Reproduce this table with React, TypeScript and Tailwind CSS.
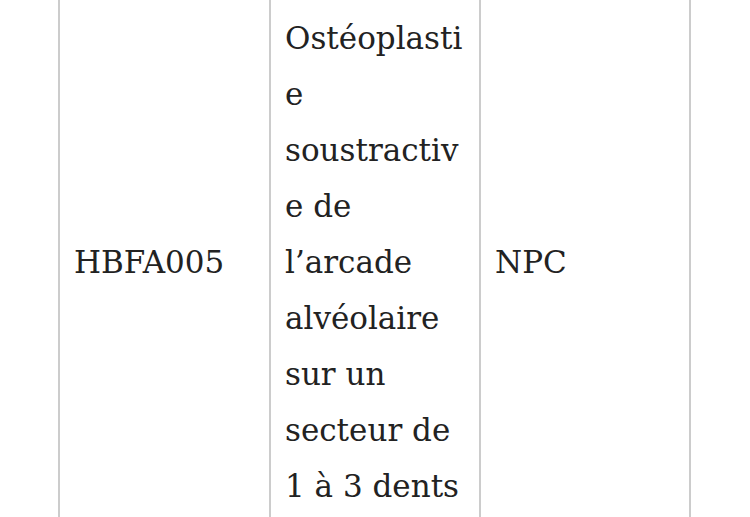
import React from 'react';

const descriptionLines = [
  'Ostéoplasti',
  'e',
  'soustractiv',
  'e de',
  'l’arcade',
  'alvéolaire',
  'sur un',
  'secteur de',
  '1 à 3 dents',
];

const App: React.FC = () => {
  return (
    <div className="w-[750px] h-[517px] overflow-hidden bg-white">
      <div className="pl-[58px] -mt-[7px]">
        <table
          className="border-collapse text-[#222] text-[31px] leading-[56px]"
          style={{ fontFamily: '"DejaVu Serif", "Liberation Serif", serif' }}
        >
          <tbody>
            <tr>
              <td className="w-[211px] min-w-[211px] border-2 border-[#cccccc] px-[14px] py-[15px] align-middle">
                HBFA005
              </td>
              <td className="w-[210px] min-w-[210px] border-2 border-[#cccccc] px-[14px] py-[15px] align-middle whitespace-nowrap">
                {descriptionLines.map((line, i) => (
                  <div key={i}>{line}</div>
                ))}
              </td>
              <td className="w-[210px] min-w-[210px] border-2 border-[#cccccc] px-[14px] py-[15px] align-middle">
                NPC
              </td>
              <td className="w-[210px] min-w-[210px] border-2 border-[#cccccc] px-[14px] py-[15px] align-middle"></td>
            </tr>
          </tbody>
        </table>
      </div>
    </div>
  );
};

export default App;
